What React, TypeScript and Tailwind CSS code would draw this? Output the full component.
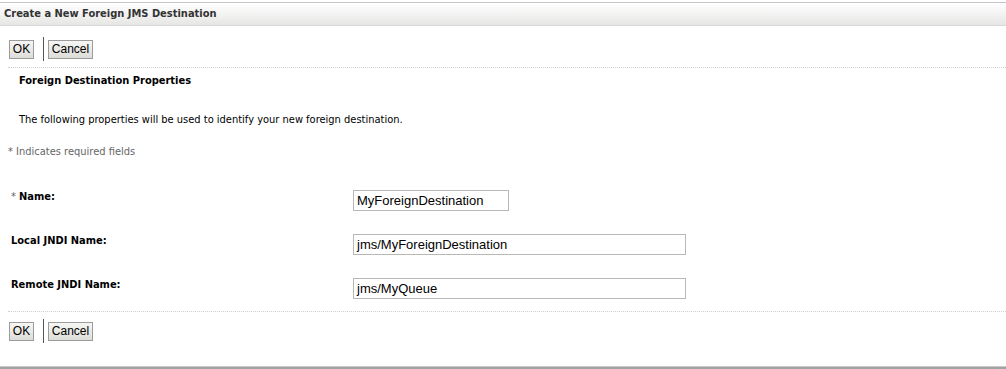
import React from 'react'

const tahoma = "font-['DejaVu_Sans_Condensed','DejaVu_Sans',sans-serif]"
const arial = "font-['Liberation_Sans',Arial,sans-serif]"

function Buttons() {
    return (
        <div className='flex items-center h-[24px] pl-[9px]'>
            <button className={`${arial} w-[25px] h-[19px] flex items-center justify-center text-[12px] leading-none text-black border border-[#9c9c9c] bg-gradient-to-b from-[#f6f6f4] to-[#dcdcd8]`}>OK</button>
            <div className='w-px h-[24px] bg-[#555] ml-[9px] mr-[4px]'></div>
            <button className={`${arial} w-[45px] h-[19px] flex items-center justify-center text-[12px] leading-none text-black border border-[#9c9c9c] bg-gradient-to-b from-[#f6f6f4] to-[#dcdcd8]`}>Cancel</button>
        </div>
    )
}

type field = {
    label: string,
    value: string,
    width: string,
    required?: boolean,
}

const fields: field[] = [
    { label: 'Name:', value: 'MyForeignDestination', width: 'w-[156px]', required: true },
    { label: 'Local JNDI Name:', value: 'jms/MyForeignDestination', width: 'w-[333px]' },
    { label: 'Remote JNDI Name:', value: 'jms/MyQueue', width: 'w-[333px]' },
]

export default function App() {
    return (
        <div className={`w-[1006px] h-[369px] bg-white flex flex-col text-[#222] ${tahoma}`}>
            <div className='mt-[2px] h-[24px] border-t border-b border-t-[#c3c8cc] border-b-[#d6d9d6] bg-gradient-to-b from-white to-[#e6e7e5] flex items-center pl-[4px]'>
                <span className='text-[11px] font-bold text-[#333]'>Create a New Foreign JMS Destination</span>
            </div>
            <div className='mt-[11px]'>
                <Buttons />
            </div>
            <div className='mt-[6px] ml-[8px] border-t border-dotted border-[#cfcfcf]'></div>
            <div className='pl-[19px] mt-[6px] h-[14px] text-[11px] font-bold text-black leading-[14px]'>Foreign Destination Properties</div>
            <div className='pl-[19px] mt-[25px] h-[14px] text-[11px] text-black leading-[14px]'>The following properties will be used to identify your new foreign destination.</div>
            <div className='pl-[8px] mt-[18px] h-[14px] text-[11px] text-[#666] leading-[14px]'>* Indicates required fields</div>
            <div className='flex flex-col mt-[31px] gap-[23px]'>
                {fields.map((f) => (
                    <div key={f.label} className='flex items-start h-[21px]'>
                        <div className='w-[353px] pl-[11px] pt-[0px] text-[11px] leading-[14px] font-bold text-black'>
                            {f.required && <span className='font-normal text-[#666] mr-[3px]'>*</span>}
                            {f.label}
                        </div>
                        <div className={`${f.width} h-[21px] border border-[#b8b8b4] flex items-center pl-[3px] ${arial} text-[13px] text-black`}>
                            {f.value}
                        </div>
                    </div>
                ))}
            </div>
            <div className='mt-[12px] ml-[8px] border-t border-dotted border-[#cfcfcf]'></div>
            <div className='mt-[7px]'>
                <Buttons />
            </div>
            <div className='flex-1'></div>
            <div className='h-[3px] bg-[#a0a2a4] border-t border-[#c8c8c8]'></div>
        </div>
    )
}
